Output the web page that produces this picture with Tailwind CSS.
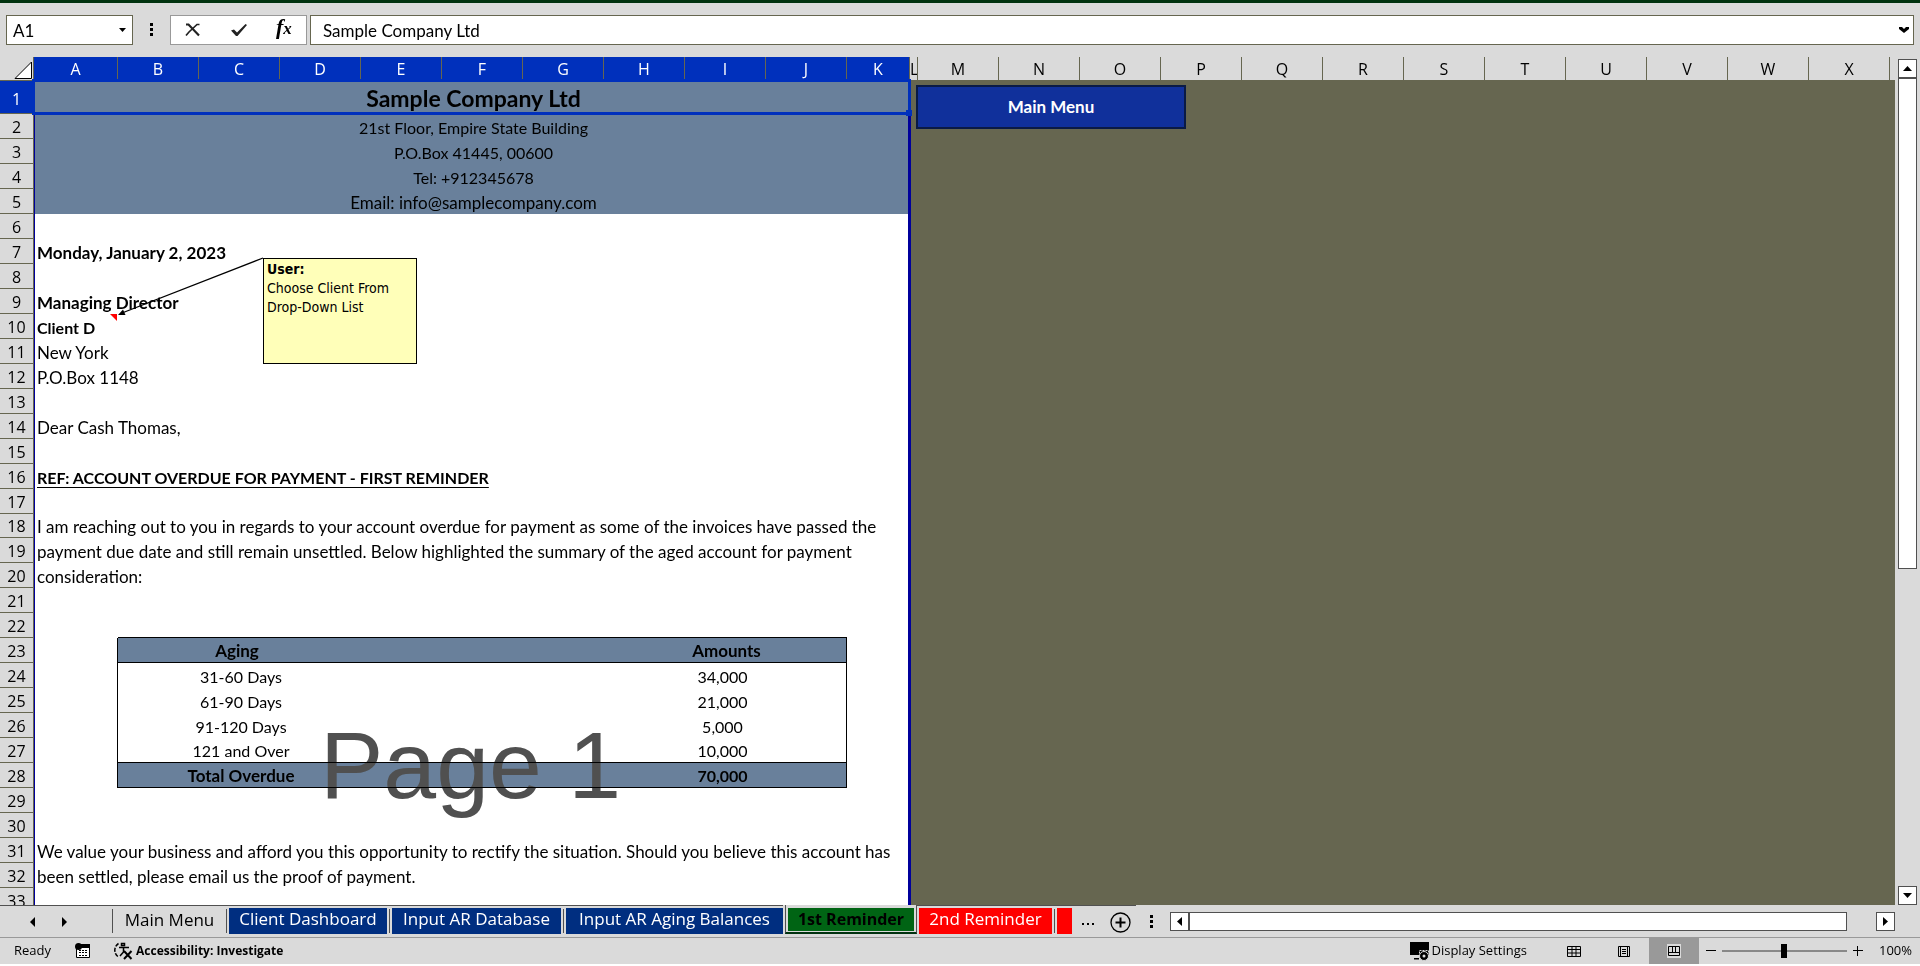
<!DOCTYPE html>
<html lang="en">
<head>
  <meta charset="utf-8" />
  <title>Sample Company Ltd - 1st Reminder</title>
  <script src="https://cdn.jsdelivr.net/npm/@tailwindcss/browser@4"></script>
  <meta name="viewport" content="width=device-width,initial-scale=1" />
</head>

<body class="h-screen flex flex-col overflow-hidden bg-white pb-0.5 text-black
             font-['Open_Sans','Noto_Sans',sans-serif]">

  <!-- ── FORMULA BAR ───────────────────────────────── -->
  <header class="h-[57px] shrink-0 bg-[#dadada] border-t-3 border-[#00320f] flex items-start pt-3 pl-1.5 pr-1.5
                 text-[17px] font-['Lato',sans-serif]">
    <div class="w-[127px] h-[30px] flex items-center border border-[#666650] bg-white">
      <input id="nameBox" aria-label="Name box" value="A1"
             class="w-full min-w-0 pl-1.5 pt-0.5 outline-none" />
      <button aria-label="Open name list" class="px-1.5">
        <svg class="w-[7px] h-1" viewBox="0 0 7 4"><path d="M0 0h7L3.500 4z" /></svg>
      </button>
    </div>

    <svg class="w-[37px] h-[30px]" viewBox="0 0 37 30"><path d="M17 8h3v3h-3zM17 13h3v3h-3zM17 18h3v3h-3z" /></svg>

    <div class="w-[137px] h-[30px] flex items-center justify-around border border-[#999] bg-white">
      <button aria-label="Cancel">
        <svg class="w-4 h-4" viewBox="0 0 16 16" fill="none" stroke="#222">
          <path d="M1 2.500h2.500L14 13.500" stroke-width="2.200" /><path d="M14.500 2.500H12L4 10l-3 3.500" stroke-width="1.700" />
        </svg>
      </button>
      <button aria-label="Enter">
        <svg class="w-[18px] h-4" viewBox="0 0 18 16"><path d="M1 8.500l3-1 3 3 8.500-8.500 1.500 1L7.500 14H6z" fill="#222" /></svg>
      </button>
      <button aria-label="Insert function" class="pb-1 font-['Liberation_Serif',serif] text-[22px] leading-6 font-bold italic">f<span class="text-[17px]">x</span></button>
    </div>

    <div class="ml-[3px] flex-1 h-[30px] flex items-center border border-[#666650] bg-white">
      <input aria-label="Formula" value="Sample Company Ltd"
             class="flex-1 min-w-0 pl-3 pt-0.5 outline-none" />
      <button aria-label="Expand formula bar" class="px-1">
        <svg class="w-[10px] h-[6px]" viewBox="0 0 10 6"><path d="M0 0h3l2 2 2-2h3v2L5 6 0 2z" /></svg>
      </button>
    </div>
  </header>

  <main class="flex-1 min-h-0 flex bg-[#dadada]">

    <!-- ── SHEET ─────────────────────────────────────── -->
    <div class="relative flex-1 overflow-hidden bg-[#666650]">
      <table class="w-full table-fixed border-separate border-spacing-0">
        <colgroup>
          <col class="w-[34px]" /><col class="w-[84px]" />
          <col class="w-[81px]" span="9" />
          <col class="w-[63px]" /><col class="w-2" />
          <col class="w-[81px]" span="12" />
          <col />
        </colgroup>
        <thead class="text-[16px] leading-[21px] [&_th]:h-6 [&_th]:px-0 [&_th]:pt-0.5 [&_th]:pb-0 [&_th]:font-normal [&_th]:border-r [&_th]:border-b [&_th]:border-[#666650] [&_th]:bg-[#dadada]">
          <tr class="[&_.sel]:bg-[#0030bc] [&_.sel]:text-white">
            <th aria-label="Select all">
              <svg class="ml-3.5 w-[18px] h-[18px]" viewBox="0 0 18 18"><path d="M1 17.500 17.500 1v16.500z" fill="#fff" stroke="#000" /></svg>
            </th>
            <th class="sel">A</th><th class="sel">B</th><th class="sel">C</th><th class="sel">D</th>
            <th class="sel">E</th><th class="sel">F</th><th class="sel">G</th><th class="sel">H</th>
            <th class="sel">I</th><th class="sel">J</th><th class="sel">K</th>
            <th class="overflow-hidden">L</th>
            <th>M</th><th>N</th><th>O</th><th>P</th><th>Q</th><th>R</th>
            <th>S</th><th>T</th><th>U</th><th>V</th><th>W</th><th>X</th>
            <td class="bg-[#dadada] border-b border-[#666650]"></td>
          </tr>
        </thead>

        <tbody class="text-[17px] leading-[22px] font-['Lato',sans-serif] whitespace-nowrap
                      [&_th]:px-0 [&_th]:pt-px [&_th]:pb-0 [&_th]:text-[16px] [&_th]:font-normal [&_th]:font-['Open_Sans'] [&_th]:bg-[#dadada]
                      [&_th]:border-r [&_th]:border-b [&_th]:border-[#666650]
                      [&_td]:pt-0.5 [&_td]:pb-0 [&_td]:pl-[3px] [&_td]:pr-0 [&_td]:bg-white
                      [&_.band]:bg-[#69809b] [&_.band]:text-center">
          <tr class="h-[33px] [&>th]:bg-[#0030bc]! [&>th]:text-white"><th class="pt-1!">1</th><td colspan="11" class="band pt-0! text-[23px] font-bold">Sample Company Ltd</td></tr>
          <tr class="h-[25px] text-[16px]"><th>2</th><td colspan="11" class="band">21st Floor, Empire State Building</td></tr>
          <tr class="h-[25px] text-[16px]"><th>3</th><td colspan="11" class="band">P.O.Box 41445, 00600</td></tr>
          <tr class="h-[25px] text-[16px]"><th>4</th><td colspan="11" class="band">Tel: +912345678</td></tr>
          <tr class="h-[25px]"><th>5</th><td colspan="11" class="band">Email: info@samplecompany.com</td></tr>
          <tr class="h-[25px]"><th>6</th><td colspan="11"></td></tr>
          <tr class="h-[25px]"><th>7</th><td colspan="11" class="font-bold">Monday, January 2, 2023</td></tr>
          <tr class="h-[25px]"><th>8</th><td colspan="11"></td></tr>
          <tr class="h-[25px]"><th>9</th><td colspan="11" class="font-bold">Managing Director</td></tr>
          <tr class="h-[25px]"><th>10</th><td colspan="11" class="text-[16px] font-bold">Client D</td></tr>
          <tr class="h-[25px]"><th>11</th><td colspan="11">New York</td></tr>
          <tr class="h-[25px]"><th>12</th><td colspan="11">P.O.Box 1148</td></tr>
          <tr class="h-[25px]"><th>13</th><td colspan="11"></td></tr>
          <tr class="h-[25px]"><th>14</th><td colspan="11">Dear Cash Thomas,</td></tr>
          <tr class="h-[25px]"><th>15</th><td colspan="11"></td></tr>
          <tr class="h-[25px]"><th>16</th><td colspan="11" class="text-[16px] font-bold underline underline-offset-3">REF: ACCOUNT OVERDUE FOR PAYMENT - FIRST REMINDER</td></tr>
          <tr class="h-[25px]"><th>17</th><td colspan="11"></td></tr>
          <tr class="h-6"><th class="pt-0!">18</th><td colspan="11" class="pt-px!">I am reaching out to you in regards to your account overdue for payment as some of the invoices have passed the</td></tr>
          <tr class="h-[25px]"><th>19</th><td colspan="11">payment due date and still remain unsettled. Below highlighted the summary of the aged account for payment</td></tr>
          <tr class="h-[25px]"><th>20</th><td colspan="11">consideration:</td></tr>
          <tr class="h-[25px]"><th>21</th><td colspan="11"></td></tr>
          <tr class="h-[25px]"><th>22</th><td></td><td colspan="9" class="border-b"></td><td></td></tr>

          <!-- aging summary, columns B to J -->
          <tr class="h-[25px] font-bold"><th>23</th><td class="border-r"></td>
            <td colspan="3" class="band border-b pr-2!">Aging</td><td colspan="3" class="band border-b"></td><td colspan="3" class="band border-b border-r">Amounts</td><td></td></tr>
          <tr class="h-[25px] text-[16px] text-center"><th>24</th><td class="border-r"></td>
            <td colspan="3">31-60 Days</td><td colspan="3"></td><td colspan="3" class="border-r pr-2!">34,000</td><td></td></tr>
          <tr class="h-[25px] text-[16px] text-center"><th>25</th><td class="border-r"></td>
            <td colspan="3">61-90 Days</td><td colspan="3"></td><td colspan="3" class="border-r pr-2!">21,000</td><td></td></tr>
          <tr class="h-[25px] text-[16px] text-center"><th>26</th><td class="border-r"></td>
            <td colspan="3">91-120 Days</td><td colspan="3"></td><td colspan="3" class="border-r pr-2!">5,000</td><td></td></tr>
          <tr class="h-[25px] text-[16px] text-center"><th>27</th><td class="border-r"></td>
            <td colspan="3" class="border-b">121 and Over</td><td colspan="3" class="border-b"></td><td colspan="3" class="border-b border-r pr-2!">10,000</td><td></td></tr>
          <tr class="h-[25px] font-bold"><th>28</th><td class="border-r"></td>
            <td colspan="3" class="band border-b">Total Overdue</td><td colspan="3" class="band border-b"></td><td colspan="3" class="band border-b border-r pr-2! text-[16px]">70,000</td><td></td></tr>

          <tr class="h-[25px]"><th>29</th><td colspan="11"></td></tr>
          <tr class="h-[25px]"><th>30</th><td colspan="11"></td></tr>
          <tr class="h-[25px]"><th>31</th><td colspan="11">We value your business and afford you this opportunity to rectify the situation. Should you believe this account has</td></tr>
          <tr class="h-[25px]"><th>32</th><td colspan="11">been settled, please email us the proof of payment.</td></tr>
          <tr class="h-[25px]"><th>33</th><td colspan="11"></td></tr>
        </tbody>
      </table>

      <!-- page break lines and page watermark -->
      <div class="absolute left-[34px] top-[57px] bottom-0 w-[877px] border-l border-r-3 border-[#00009c]"></div>
      <div class="absolute left-[320px] top-[653px] text-[95px] leading-[110px] text-[#505050] mix-blend-darken
                  font-['Liberation_Sans',sans-serif]">Page 1</div>

      <!-- selected cell -->
      <div class="absolute left-8 top-[22px] w-[879px] h-9 border-3 border-[#0030bc]"></div>
      <div class="absolute left-[906px] top-[53px] w-1.5 h-1.5 bg-[#0030bc]"></div>

      <button class="absolute left-[916px] top-7 w-[270px] h-11 border-2 border-[#0a1a45] bg-[#10309b]
                     text-white text-[17px] font-bold font-['Lato',sans-serif]">Main Menu</button>

      <!-- cell comment -->
      <svg class="absolute left-[110px] top-[200px] w-[154px] h-[66px]" viewBox="0 0 154 66">
        <path d="M0 57h7v7z" fill="#f00" />
        <path d="M153 1 12 56" stroke="#000" stroke-width="1.300" />
        <path d="M8 58 13 52.500 15.500 58z" />
      </svg>
      <div class="absolute left-[263px] top-[201px] w-[154px] h-[106px] pl-[3px] pt-px border border-black bg-[#ffffb9]
                  text-[14px] leading-[19px] font-['DejaVu_Sans_Condensed','DejaVu_Sans',sans-serif]">
        <b>User:</b><br />
        Choose Client From<br />
        Drop-Down List
      </div>
    </div>

    <!-- vertical scroll bar -->
    <div class="w-[25px] flex flex-col items-center pt-0.5 pr-1 pl-[3px]">
      <button aria-label="Scroll up" class="w-[19px] h-[19px] shrink-0 flex items-center justify-center border border-[#505050] bg-white">
        <svg class="w-[9px] h-[5px]" viewBox="0 0 9 5"><path d="M0 5h9L4.500 0z" /></svg>
      </button>
      <div class="w-[19px] h-[58%] border border-[#505050] bg-white"></div>
      <button aria-label="Scroll down" class="mt-auto w-[19px] h-[19px] shrink-0 flex items-center justify-center border border-[#505050] bg-white">
        <svg class="w-[9px] h-[5px]" viewBox="0 0 9 5"><path d="M0 0h9L4.500 5z" /></svg>
      </button>
    </div>
  </main>

  <!-- ── SHEET TABS ────────────────────────────────── -->
  <nav class="h-8 shrink-0 flex bg-[#dadada] text-[17px] leading-[22px] whitespace-nowrap">
    <div class="flex border-t border-[#505050]">
      <button aria-label="Previous sheet" class="ml-6 w-4 h-8 flex items-center justify-center">
        <svg class="w-[5px] h-[10px]" viewBox="0 0 5 10"><path d="M5 0v10L0 5z" /></svg>
      </button>
      <button aria-label="Next sheet" class="ml-4 w-4 h-8 flex items-center justify-center">
        <svg class="w-[5px] h-[10px]" viewBox="0 0 5 10"><path d="M0 0v10l5-5z" /></svg>
      </button>
      <button class="ml-10 mt-[3px] w-[115px] h-6 pb-1 border-x border-[#505050]">Main Menu</button>
      <button class="ml-0.5 mt-0.5 w-[158px] h-[26px] pb-1 bg-[#002e80] text-white">Client Dashboard</button>
      <i class="mx-0.5 mt-[3px] w-px h-6 bg-[#505050]"></i>
      <button class="mt-0.5 w-[169px] h-[26px] pb-1 bg-[#002e80] text-white">Input AR Database</button>
      <i class="mx-0.5 mt-[3px] w-px h-6 bg-[#505050]"></i>
      <button class="mt-0.5 w-[217px] h-[26px] pb-1 bg-[#002e80] text-white">Input AR Aging Balances</button>
    </div>
    <div class="ml-0.5 w-[132px] h-[29px] pt-[3px] px-0.5 border-x border-b-2 border-x-[#505050] border-b-[#00320f]">
      <button class="w-full h-[23px] pb-1 bg-[#006414] text-[16px] font-bold" aria-current="page">1st Reminder</button>
    </div>
    <div class="flex border-t border-[#505050]">
      <button class="ml-0.5 mt-0.5 w-[133px] h-[26px] pb-1 bg-[#f00] text-white">2nd Reminder</button>
      <i class="mx-0.5 mt-[3px] w-px h-6 bg-[#505050]"></i>
      <button aria-label="Next reminder sheet" class="mt-0.5 w-[15px] h-[26px] bg-[#f00]"></button>
      <button aria-label="More sheets" class="w-8 h-8 pt-1 flex items-center justify-center">
        <svg class="w-3 h-0.5" viewBox="0 0 12 2"><path d="M0 0h2v2H0zM5 0h2v2H5zM10 0h2v2h-2z" /></svg>
      </button>
      <button aria-label="New sheet" class="w-8 h-8 flex items-center justify-center">
        <svg class="w-[21px] h-[21px]" viewBox="0 0 21 21" fill="none" stroke="#000">
          <circle cx="10.500" cy="10.500" r="9.500" stroke-width="1.300" /><path d="M10.500 5.500v10M5.500 10.500h10" stroke-width="2" />
        </svg>
      </button>
    </div>
    <svg class="ml-3.5 mt-2.5 w-[3px] h-[13px]" viewBox="0 0 3 13"><path d="M0 0h3v3H0zM0 5h3v3H0zM0 10h3v3H0z" /></svg>

    <!-- horizontal scroll bar -->
    <div class="flex-1 flex ml-[17px] mr-[25px] mt-[7px] h-[19px]">
      <button aria-label="Scroll left" class="w-[19px] flex items-center justify-center border border-[#505050] bg-white">
        <svg class="w-[5px] h-[9px]" viewBox="0 0 5 9"><path d="M5 0v9L0 4.500z" /></svg>
      </button>
      <div class="flex-1 border border-[#505050] bg-white"></div>
      <button aria-label="Scroll right" class="ml-[29px] w-[19px] flex items-center justify-center border border-[#505050] bg-white">
        <svg class="w-[5px] h-[9px]" viewBox="0 0 5 9"><path d="M0 0v9l5-4.500z" /></svg>
      </button>
    </div>
  </nav>

  <!-- ── STATUS BAR ────────────────────────────────── -->
  <footer class="h-[27px] shrink-0 flex items-center bg-[#dadada] border-t border-[#999] text-[13px] whitespace-nowrap">
    <span class="ml-3.5">Ready</span>
    <button aria-label="Record macro" class="ml-6">
      <svg class="w-4 h-4" viewBox="0 0 16 16">
        <path d="M1.500 2v12.500h13V2z" fill="#fff" stroke="#000" /><path d="M6 1h9v4H1z" /><circle cx="3.500" cy="3.500" r="3.500" />
        <path d="M4 7h2v1H4zM7 7h2v1H7zM10 7h2v1h-2zM4 9h2v1H4zM7 9h2v1H7zM10 9h2v1h-2zM4 12h2v1H4zM7 12h2v1H7zM10 12h2v1h-2z" />
      </svg>
    </button>
    <button class="ml-[22px] flex items-center gap-[3px] text-[12px] font-bold">
      <svg class="w-5 h-[18px]" viewBox="0 0 20 18" fill="none" stroke="#000" stroke-width="1.500">
        <path d="M5.500 1.500A8 8 0 0 0 5.500 15" stroke-dasharray="4 1.500" /><path d="M6 5.500h10M10.500 5v5L7 14M8.500 1.500h3v2h-3z" />
        <path d="m11 9 7.500 8M18.500 9 11 17" stroke-width="2" />
      </svg>
      Accessibility: Investigate
    </button>

    <button class="ml-auto flex items-center gap-px">
      <svg class="w-5 h-5" viewBox="0 0 20 20">
        <path d="M0 1h19v13H0zM4 17h5v1.500H4z" />
        <g stroke="#dadada"><path d="M9.500 9.500h9v3h-9z" stroke-dasharray="2 1" fill="none" /><circle cx="14" cy="15" r="4.500" /></g>
        <circle cx="14" cy="15" r="1.500" fill="#dadada" />
      </svg>
      Display Settings
    </button>
    <button aria-label="Normal view" class="ml-10">
      <svg class="w-3.5 h-3" viewBox="0 0 14 12" fill="none" stroke="#000"><path d="M.5 1.500h13v10H.5zM0 4.500h14M0 8h14M5 1v11M9 1v11" /></svg>
    </button>
    <button aria-label="Page layout view" class="ml-[37px]">
      <svg class="w-3 h-3" viewBox="0 0 12 12" fill="none" stroke="#000"><path d="M.5 1.500h11v10H.5zM2.500 1.500h7v10h-7zM4 4.500h4M4 6.500h4M4 8.500h4" /></svg>
    </button>
    <button aria-label="Page break preview" class="ml-[19px] w-[50px] h-[26px] flex items-center justify-center bg-[#999]">
      <svg class="w-3.5 h-3.5 bg-[#dadada]" viewBox="0 0 14 14" fill="none" stroke="#000"><path d="M1.500 2.500h11v9h-11zM1.500 8.500h11M5.500 2.500v6M8.500 2.500v6" /></svg>
    </button>
    <button aria-label="Zoom out" class="ml-[7px]">
      <svg class="w-2.5 h-2.5" viewBox="0 0 10 10"><path d="M0 4h10v1H0z" /></svg>
    </button>
    <input type="range" aria-label="Zoom" min="0" max="200" value="100"
           class="ml-1.5 w-[125px] h-4 appearance-none bg-linear-to-b from-transparent from-45% via-black via-50% to-transparent to-55%
                  [&::-webkit-slider-thumb]:appearance-none [&::-webkit-slider-thumb]:w-1.5 [&::-webkit-slider-thumb]:h-3.5 [&::-webkit-slider-thumb]:bg-black" />
    <button aria-label="Zoom in" class="ml-1.5">
      <svg class="w-2.5 h-2.5" viewBox="0 0 10 10"><path d="M0 4h10v1H0zM4 0h1v10H4z" /></svg>
    </button>
    <span class="ml-4 mr-2">100%</span>
  </footer>

</body>
</html>
